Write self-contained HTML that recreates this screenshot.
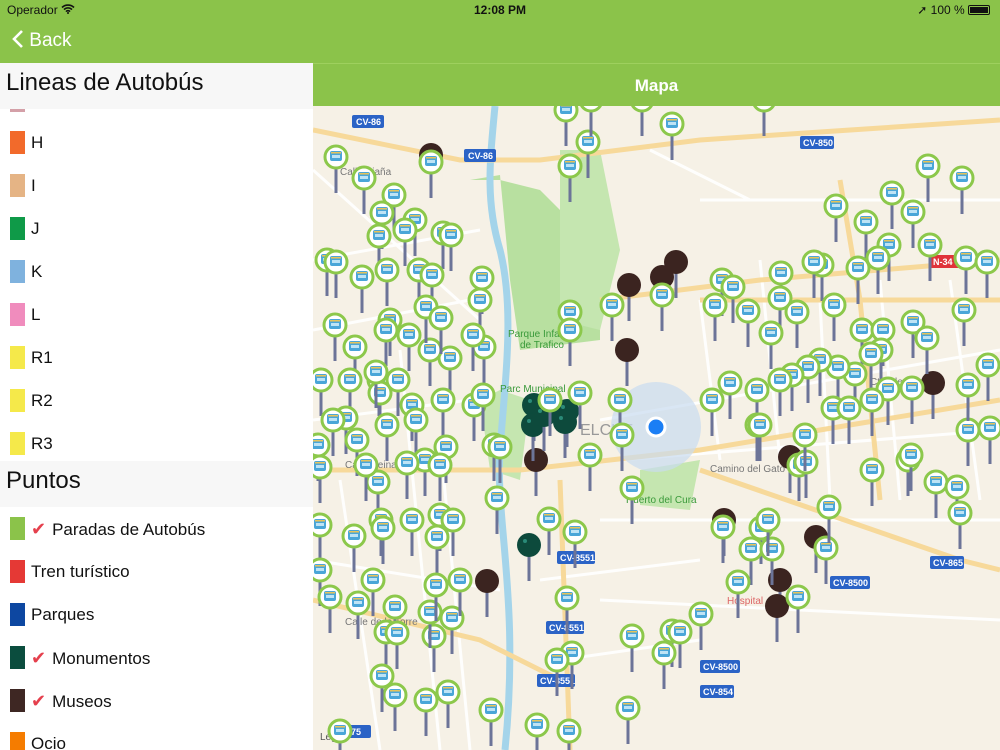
<!DOCTYPE html>
<html><head><meta charset="utf-8">
<style>
*{margin:0;padding:0;box-sizing:border-box}
body{width:1000px;height:750px;overflow:hidden;font-family:"Liberation Sans",sans-serif;position:relative;background:#fff}
.top{position:absolute;left:0;top:0;width:1000px;height:63px;background:#8bc34a;color:#fff}
.sb{position:absolute;top:3px;font-size:12px;color:#111}
.back{position:absolute;left:12px;top:29px;font-size:19px;color:#fff}
.side{position:absolute;left:0;top:63px;width:313px;height:687px;background:#fff;overflow:hidden}
.hdr{position:absolute;left:0;width:313px;height:46px;background:#f7f7f7;font-size:24px;color:#111;padding:6px 0 0 6px}
.row{position:absolute;left:0;height:43px;font-size:17px;color:#111}
.sw{position:absolute;left:10px;top:0;width:15px;height:23px}
.lbl{position:absolute;left:31px;top:2px;white-space:nowrap}
.chk{color:#e5404d;font-size:18px;margin-right:6px}
.title{position:absolute;left:313px;top:63px;width:687px;height:43px;background:#8bc34a;color:#fff;font-size:17px;font-weight:bold;text-align:center;line-height:43px;border-top:1px solid #9ed05e}
.map{position:absolute;left:313px;top:106px;width:687px;height:644px;overflow:hidden;background:#f6f1e6}
</style></head><body>
<div class="top">
<div class="sb" style="left:7px">Operador <svg width="14" height="10" viewBox="0 0 14 10"><path d="M1 3.5a8.5 8.5 0 0 1 12 0M3 5.6a5.5 5.5 0 0 1 8 0M5 7.6a2.6 2.6 0 0 1 4 0" stroke="#111" stroke-width="1.6" fill="none"/><circle cx="7" cy="9" r="1" fill="#111"/></svg></div>
<div class="sb" style="left:0;width:1000px;text-align:center;font-weight:bold">12:08 PM</div>
<div class="sb" style="right:10px">➚ 100 % <span style="display:inline-block;width:22px;height:10px;border:1px solid #111;border-radius:2px;vertical-align:-1px;padding:1px"><span style="display:block;height:100%;background:#111"></span></span></div>
<div class="back"><svg width="12" height="20" viewBox="0 0 12 20" style="vertical-align:-3px"><path d="M10 2L2 10l8 8" stroke="#fff" stroke-width="2.6" fill="none"/></svg> Back</div>
</div>
<div class="side">
<div class="hdr" style="top:0">Lineas de Autobús</div>
<div class="sw" style="top:46px;height:3px;background:#d4a0a8;left:10px"></div>
<div class="row" style="top:68px"><div class="sw" style="background:#f26a2b"></div><div class="lbl">H</div></div>
<div class="row" style="top:111px"><div class="sw" style="background:#e5b485"></div><div class="lbl">I</div></div>
<div class="row" style="top:154px"><div class="sw" style="background:#0f9a48"></div><div class="lbl">J</div></div>
<div class="row" style="top:197px"><div class="sw" style="background:#7fb2de"></div><div class="lbl">K</div></div>
<div class="row" style="top:240px"><div class="sw" style="background:#f08cbd"></div><div class="lbl">L</div></div>
<div class="row" style="top:283px"><div class="sw" style="background:#f5e94a"></div><div class="lbl">R1</div></div>
<div class="row" style="top:326px"><div class="sw" style="background:#f5e94a"></div><div class="lbl">R2</div></div>
<div class="row" style="top:369px"><div class="sw" style="background:#f5e94a"></div><div class="lbl">R3</div></div>
<div class="hdr" style="top:398px;height:46px">Puntos</div>
<div class="row" style="top:454px"><div class="sw" style="background:#8bc34a"></div><div class="lbl"><span class="chk">✔</span>Paradas de Autobús</div></div>
<div class="row" style="top:497px"><div class="sw" style="background:#e53935"></div><div class="lbl" style="left:31px">Tren turístico</div></div>
<div class="row" style="top:540px"><div class="sw" style="background:#0d47a1"></div><div class="lbl">Parques</div></div>
<div class="row" style="top:583px"><div class="sw" style="background:#0b4d3e"></div><div class="lbl"><span class="chk">✔</span>Monumentos</div></div>
<div class="row" style="top:626px"><div class="sw" style="background:#3e2723"></div><div class="lbl"><span class="chk">✔</span>Museos</div></div>
<div class="row" style="top:669px"><div class="sw" style="background:#f57c00"></div><div class="lbl">Ocio</div></div>
</div>
<div class="title">Mapa</div>
<div class="map"><svg id="m" width="687" height="644" viewBox="313 106 687 644" xmlns="http://www.w3.org/2000/svg">
<rect x="313" y="106" width="687" height="644" fill="#f6f1e6"/>
<path d="M470 180L500 175 510 280 520 350 600 340 600 250 540 190 500 180Z" fill="#b8e0a0"/>
<path d="M560 150L600 150 620 250 600 330 560 320Z" fill="#c5e6b0"/>
<path d="M480 400L500 390 530 400 520 480 490 470Z" fill="#c5e6b0"/>
<path d="M640 470L700 460 690 510 640 505Z" fill="#c5e6b0"/>
<path d="M495 106C490 160 485 200 500 250 515 310 505 380 500 450 495 520 520 600 505 750" stroke="#a4d4ea" stroke-width="7" fill="none"/>
<g stroke="#fff" stroke-width="3" fill="none" opacity=".9">
<path d="M313 170L480 320M313 260L480 230M313 330L470 300M313 420L470 400M330 470L480 470M313 560L500 590M340 480L380 750M400 350L440 750M440 440L470 750M600 420L1000 350M620 460L1000 430M600 520L1000 520M700 300L720 460M760 260L780 460M820 300L830 500M880 280L900 500M950 280L980 500M540 580L700 560M560 660L700 640M600 600L1000 620M650 150L750 200M700 200L1000 200"/>
</g>
<g stroke="#f7d99a" stroke-width="5" fill="none">
<path d="M313 130L460 160 540 160 700 140 1000 120"/>
<path d="M600 300L760 280 1000 260"/>
<path d="M520 470L700 450 1000 400"/>
<path d="M313 470L520 470"/>
<path d="M560 480L570 750"/>
<path d="M700 470L960 560 1000 570"/>
<path d="M840 180L860 300 880 500"/>
<path d="M700 300L1000 300"/>
<path d="M313 600L480 640 560 680"/>
</g>
<g font-family="Liberation Sans" font-size="9" font-weight="bold" fill="#fff">
<rect x="352" y="115" width="32" height="13" rx="2" fill="#2b63c6"/><text x="356" y="125">CV-86</text>
<rect x="464" y="149" width="32" height="13" rx="2" fill="#2b63c6"/><text x="468" y="159">CV-86</text>
<rect x="800" y="136" width="34" height="13" rx="2" fill="#2b63c6"/><text x="803" y="146">CV-850</text>
<rect x="557" y="551" width="38" height="13" rx="2" fill="#2b63c6"/><text x="560" y="561">CV-8551</text>
<rect x="546" y="621" width="38" height="13" rx="2" fill="#2b63c6"/><text x="549" y="631">CV-8551</text>
<rect x="537" y="674" width="38" height="13" rx="2" fill="#2b63c6"/><text x="540" y="684">CV-8551</text>
<rect x="830" y="576" width="40" height="13" rx="2" fill="#2b63c6"/><text x="833" y="586">CV-8500</text>
<rect x="700" y="660" width="40" height="13" rx="2" fill="#2b63c6"/><text x="703" y="670">CV-8500</text>
<rect x="700" y="685" width="34" height="13" rx="2" fill="#2b63c6"/><text x="703" y="695">CV-854</text>
<rect x="930" y="556" width="34" height="13" rx="2" fill="#2b63c6"/><text x="933" y="566">CV-865</text>
<rect x="930" y="255" width="30" height="13" rx="2" fill="#e0333a"/><text x="933" y="265">N-34</text>
<rect x="343" y="725" width="28" height="13" rx="2" fill="#2b63c6"/><text x="346" y="735">875</text>
</g>
<g font-family="Liberation Sans" font-size="10" fill="#3a9a3a">
<text x="508" y="337">Parque Infantil</text><text x="520" y="348">de Trafico</text>
<text x="500" y="392">Parc Municipal</text>
<text x="626" y="503">Huerto del Cura</text>
<text x="727" y="604" fill="#d66">Hospital</text>
</g>
<g font-family="Liberation Sans" font-size="10" fill="#777">
<text x="340" y="175">Calle Piaña</text><text x="345" y="468">Calle Reina Victoria</text><text x="710" y="472">Camino del Gato</text><text x="870" y="385">Ctra de Alicante</text><text x="345" y="625">Calle de la Torre</text><text x="580" y="435" font-size="16" fill="#999">ELCHE</text><text x="320" y="740" fill="#555">Legal</text>
</g>
<circle cx="656" cy="427" r="45" fill="#c9dcf0" opacity=".7"/>
<circle cx="656" cy="427" r="9" fill="#1a7ef5" stroke="#fff" stroke-width="3"/>
<g id="pins"></g>
</svg></div>
<script>
var g=[[336,157],[364,178],[394,195],[382,213],[415,220],[379,236],[405,230],[443,233],[451,235],[431,162],[570,166],[588,142],[566,110],[591,100],[672,124],[642,100],[764,100],[928,166],[962,178],[892,193],[913,212],[866,222],[836,206],[889,245],[930,245],[966,258],[987,262],[858,268],[878,258],[822,265],[814,262],[781,273],[780,298],[722,280],[733,287],[715,305],[748,311],[771,333],[797,312],[834,305],[862,330],[883,330],[913,322],[927,338],[964,310],[988,365],[881,350],[871,354],[855,374],[838,367],[820,360],[808,367],[792,375],[780,380],[730,383],[757,390],[712,400],[757,425],[662,295],[612,305],[570,312],[570,330],[482,278],[480,300],[484,347],[473,335],[450,358],[430,350],[409,335],[390,320],[386,330],[335,325],[327,260],[336,262],[362,277],[387,270],[419,270],[432,275],[426,307],[441,318],[355,347],[379,380],[398,380],[380,393],[350,380],[376,372],[321,380],[346,418],[333,420],[387,425],[412,405],[416,420],[443,400],[474,405],[483,395],[446,447],[425,460],[440,465],[407,463],[378,482],[357,440],[366,465],[494,445],[500,447],[550,400],[580,393],[620,400],[590,455],[622,435],[632,488],[575,532],[549,519],[497,498],[440,515],[412,520],[381,520],[354,536],[320,525],[320,570],[383,528],[437,537],[453,520],[358,603],[330,597],[373,580],[395,607],[386,632],[397,633],[434,636],[452,618],[430,612],[460,580],[436,585],[567,598],[572,653],[557,660],[632,636],[672,631],[680,632],[701,614],[664,653],[628,708],[569,731],[537,725],[491,710],[448,692],[426,700],[395,695],[382,676],[340,731],[761,528],[723,527],[751,549],[772,549],[768,520],[798,597],[738,582],[826,548],[829,507],[799,465],[806,462],[872,470],[908,460],[911,455],[936,482],[957,487],[960,513],[968,430],[990,428],[968,385],[888,389],[833,408],[849,408],[872,400],[912,388],[805,435],[760,425],[318,445],[320,467]];
var b=[[431,155],[676,262],[662,277],[629,285],[627,350],[933,383],[790,457],[536,460],[724,520],[816,537],[780,580],[777,606],[487,581]];
var t=[[534,405],[533,425],[567,411],[544,415],[565,422],[529,545]];
var s='';
function stem(x,y){return '<rect x="'+(x-1.5)+'" y="'+y+'" width="3" height="36" fill="#6c7498"/>';}
b.forEach(function(p){s+=stem(p[0],p[1])+'<circle cx="'+p[0]+'" cy="'+p[1]+'" r="12" fill="#3b2420"/>';});
t.forEach(function(p){s+=stem(p[0],p[1])+'<circle cx="'+p[0]+'" cy="'+p[1]+'" r="12" fill="#0d4a3c"/><circle cx="'+(p[0]-4)+'" cy="'+(p[1]-4)+'" r="2" fill="#2a8a78"/>';});
g.forEach(function(p){var x=p[0],y=p[1];s+=stem(x,y)+'<circle cx="'+x+'" cy="'+y+'" r="11" fill="#fff" stroke="#8cc84b" stroke-width="3"/><rect x="'+(x-6)+'" y="'+(y-6)+'" width="12" height="10" rx="2" fill="#4aa6d8"/><rect x="'+(x-5)+'" y="'+(y-5)+'" width="10" height="1.5" fill="#e6c35a"/><rect x="'+(x-4)+'" y="'+(y-2)+'" width="8" height="3" fill="#bde3f5"/>';});
document.getElementById('pins').innerHTML=s;
</script>
</body></html>
